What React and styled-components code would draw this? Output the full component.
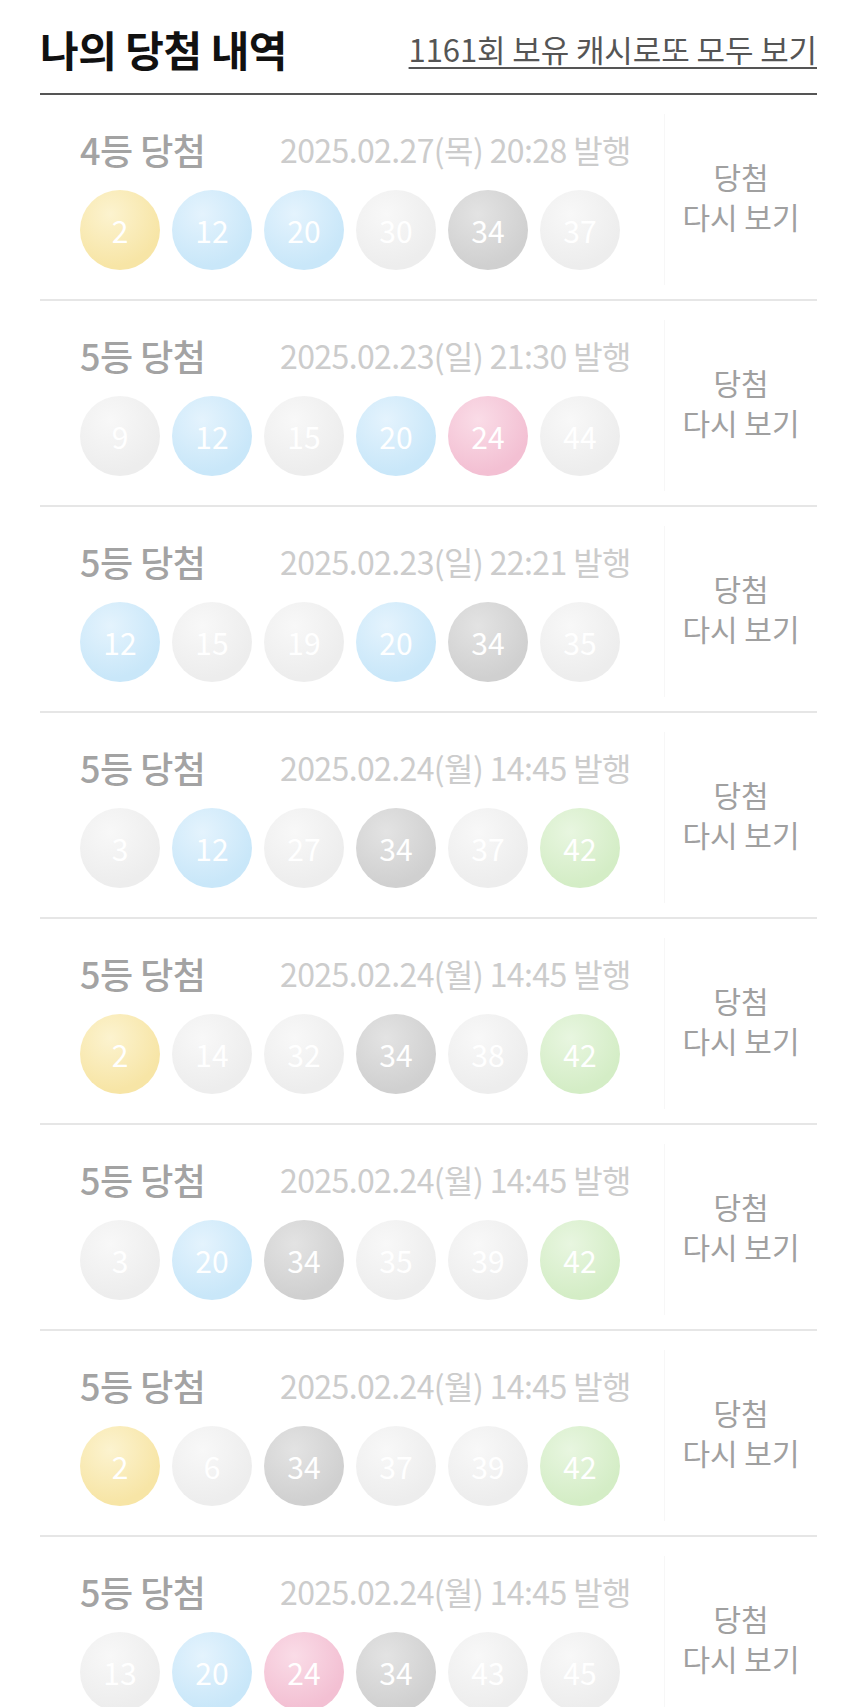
import React from "react";
import styled, { createGlobalStyle } from "styled-components";

const Global = createGlobalStyle`
  html, body { margin: 0; padding: 0; background: #ffffff; }
  body { font-family: "Noto Sans CJK KR", "Noto Sans", sans-serif; }
`;

const Page = styled.div`
  padding: 0 39px 0 40px;
  width: 856px;
  box-sizing: border-box;
`;

const Header = styled.header`
  display: flex;
  align-items: center;
  justify-content: space-between;
  height: 95px;
  padding-top: 4px;
  box-sizing: border-box;
  border-bottom: 2px solid #555555;
`;

const Title = styled.h1`
  margin: 0;
  font-size: 42px;
  font-weight: 700;
  color: #111111;
  letter-spacing: -0.5px;
`;

const AllLink = styled.a`
  font-size: 31px;
  color: #555555;
  text-decoration: underline;
  text-decoration-thickness: 2px;
  text-underline-offset: 5px;
  letter-spacing: -0.1px;
  cursor: pointer;
`;

const Row = styled.div`
  display: flex;
  height: 206px;
  box-sizing: border-box;
  border-bottom: 2px solid #e6e6e6;
`;

const Panel = styled.div`
  width: 625px;
  margin: 19px 0 14px;
  padding: 14px 0 0 40px;
  box-sizing: border-box;
  border-right: 1px solid #f7f7f7;
`;

const InfoLine = styled.div`
  display: flex;
  align-items: center;
  height: 42px;
`;

const Rank = styled.span`
  width: 200px;
  font-size: 36px;
  font-weight: 500;
  color: #a3a3a3;
  letter-spacing: -0.5px;
`;

const Issued = styled.span`
  font-size: 32px;
  color: #cccccc;
  letter-spacing: -0.6px;
`;

const Balls = styled.div`
  display: flex;
  gap: 12px;
  margin-top: 20px;
`;

const palette = {
  y: ["#fcf3cf", "#f7e5a6"],
  b: ["#e4f3fd", "#c9e7f9"],
  r: ["#fadce7", "#f3c0d3"],
  g: ["#e3e3e3", "#d0d0d0"],
  n: ["#e8f6e0", "#d4edc6"],
  x: ["#f8f8f8", "#ededed"],
};

const Ball = styled.div`
  width: 80px;
  height: 80px;
  border-radius: 50%;
  display: flex;
  align-items: center;
  justify-content: center;
  font-size: 30px;
  color: #ffffff;
  background: radial-gradient(
    circle at 38% 30%,
    ${(p) => palette[p.$c][0]} 0%,
    ${(p) => palette[p.$c][1]} 70%
  );
`;

const Replay = styled.div`
  flex: 1;
  display: flex;
  flex-direction: column;
  align-items: center;
  justify-content: center;
  font-size: 30px;
  line-height: 40px;
  color: #a0a0a0;
  padding-bottom: 2px;
`;

const rows = [
  { rank: "4등 당첨", date: "2025.02.27(목) 20:28 발행", balls: [[2, "y"], [12, "b"], [20, "b"], [30, "x"], [34, "g"], [37, "x"]] },
  { rank: "5등 당첨", date: "2025.02.23(일) 21:30 발행", balls: [[9, "x"], [12, "b"], [15, "x"], [20, "b"], [24, "r"], [44, "x"]] },
  { rank: "5등 당첨", date: "2025.02.23(일) 22:21 발행", balls: [[12, "b"], [15, "x"], [19, "x"], [20, "b"], [34, "g"], [35, "x"]] },
  { rank: "5등 당첨", date: "2025.02.24(월) 14:45 발행", balls: [[3, "x"], [12, "b"], [27, "x"], [34, "g"], [37, "x"], [42, "n"]] },
  { rank: "5등 당첨", date: "2025.02.24(월) 14:45 발행", balls: [[2, "y"], [14, "x"], [32, "x"], [34, "g"], [38, "x"], [42, "n"]] },
  { rank: "5등 당첨", date: "2025.02.24(월) 14:45 발행", balls: [[3, "x"], [20, "b"], [34, "g"], [35, "x"], [39, "x"], [42, "n"]] },
  { rank: "5등 당첨", date: "2025.02.24(월) 14:45 발행", balls: [[2, "y"], [6, "x"], [34, "g"], [37, "x"], [39, "x"], [42, "n"]] },
  { rank: "5등 당첨", date: "2025.02.24(월) 14:45 발행", balls: [[13, "x"], [20, "b"], [24, "r"], [34, "g"], [43, "x"], [45, "x"]] },
];

export default function App() {
  return (
    <>
      <Global />
      <Page>
        <Header>
          <Title>나의 당첨 내역</Title>
          <AllLink>1161회 보유 캐시로또 모두 보기</AllLink>
        </Header>
        {rows.map((r, i) => (
          <Row key={i}>
            <Panel>
              <InfoLine>
                <Rank>{r.rank}</Rank>
                <Issued>{r.date}</Issued>
              </InfoLine>
              <Balls>
                {r.balls.map(([n, c], j) => (
                  <Ball key={j} $c={c}>{n}</Ball>
                ))}
              </Balls>
            </Panel>
            <Replay>
              <span>당첨</span>
              <span>다시 보기</span>
            </Replay>
          </Row>
        ))}
      </Page>
    </>
  );
}
